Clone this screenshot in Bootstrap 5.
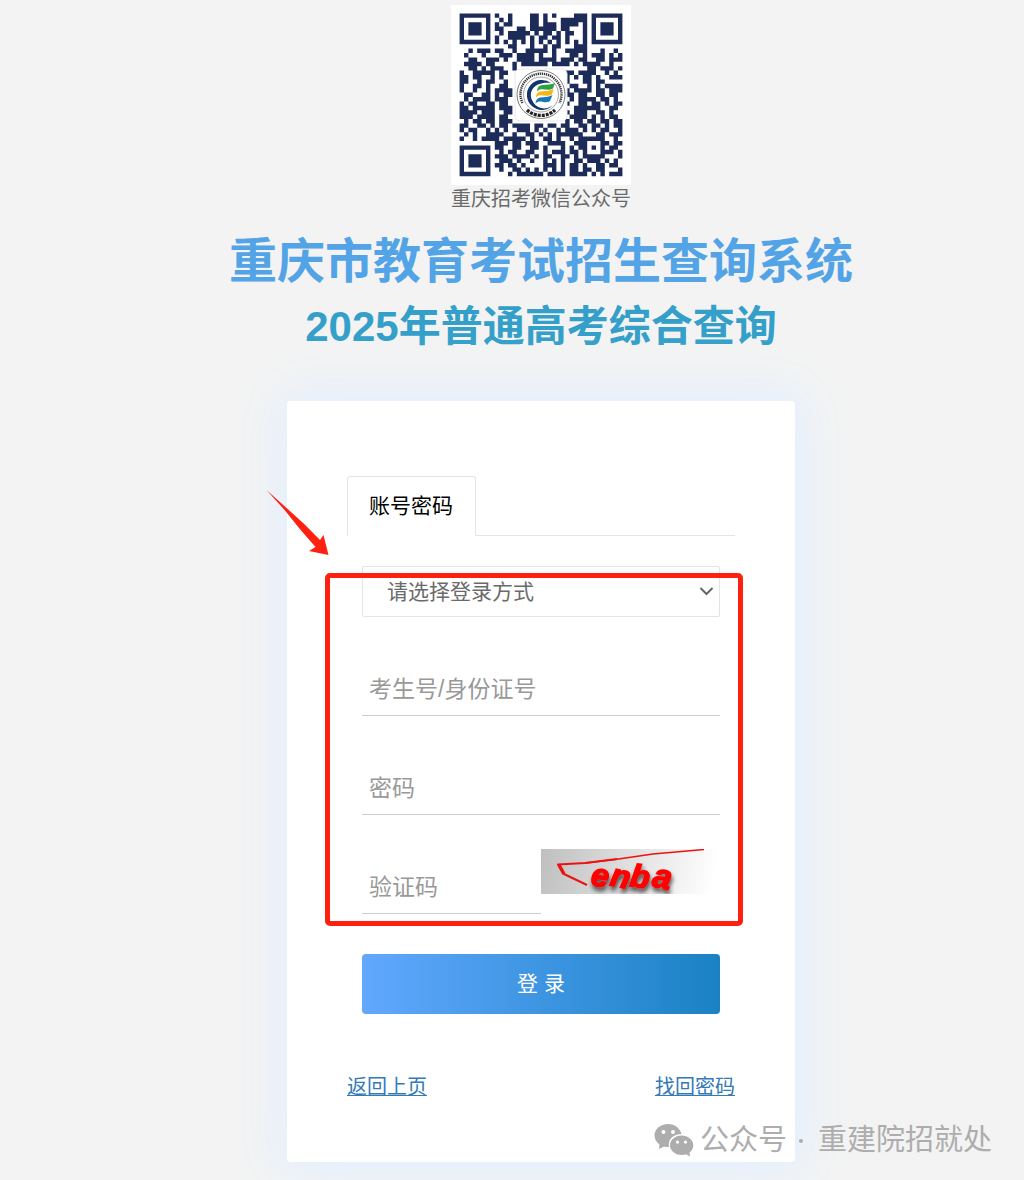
<!DOCTYPE html>
<html lang="zh-CN">
<head>
<meta charset="utf-8">
<meta name="viewport" content="width=device-width, initial-scale=1">
<title>重庆市教育考试招生查询系统</title>
<link href="https://cdn.jsdelivr.net/npm/bootstrap@5.3.0/dist/css/bootstrap.min.css" rel="stylesheet">
<style>
  body { background: #f3f3f3; font-family: "Liberation Sans", "Noto Sans CJK SC", sans-serif; color: #6a6a6a; }
  .page-wrap { padding: 5px 0 18px 58px; overflow: hidden; }
  .qr-code { width: 180px; height: 180px; }
  .qr-caption { font-size: 20px; line-height: 28px; }
  .site-title { font-size: 48px; line-height: 66px; font-weight: 700; color: #53a4e6; margin: 16px 0 2px; }
  .site-subtitle { font-size: 42px; line-height: 60px; font-weight: 700; color: #34a0ca; margin: 0 0 44px; }
  .login-card { width: 100%; max-width: 508px; padding: 75px 60px 60px; border: 0; border-radius: 4px; box-shadow: 0 0 50px 8px #e2efff; }
  .login-tabs { --bs-nav-tabs-border-color: #e4e4e4; --bs-nav-tabs-border-radius: 3px; }
  .login-tabs .nav-link.active { padding: 14px 22px 14px 21px; font-size: 21px; line-height: 30px; color: #000; font-weight: 400; border-color: #e4e4e4 #e4e4e4 #fff; }
  .login-form { padding: 30px 15px 0; }
  .login-form .form-select { height: 51px; padding: 0 24px; font-size: 21px; color: #6a6a6a; border-color: #e4e4e4; border-radius: 2px;
    background-image: none; }
  .select-arrow { position: absolute; right: 6px; top: 18px; width: 15px; height: 14px; pointer-events: none; }
  .line-input { height: 55px; padding: 2px 7px 0; border: 0; border-bottom: 1px solid #ccc; border-radius: 0; font-size: 23px; background: transparent; }
  .line-input::placeholder { color: #999; }
  .field-gap { margin-top: 44px; }
  .captcha-row { margin-top: 34px; }
  .captcha-img { height: 45px; margin-bottom: 20px; }
  .btn-login { height: 60px; margin-top: 40px; border: 0; border-radius: 4px; color: #fff; font-size: 21px; font-weight: 400; background: linear-gradient(90deg, #61a8ff, #1a82c4); }
  .btn-login:hover { color: #fff; }
  .foot-links { margin-top: 59px; font-size: 20px; line-height: 29px; }
  .foot-links a { color: #337ab7; text-decoration-thickness: 1px; }
  .mark-frame { position: absolute; left: 38px; right: 52px; top: 172px; height: 353px; border: 5px solid #ff2010; border-radius: 5px; pointer-events: none; }
  .mark-arrow { position: absolute; left: -21px; top: 88px; width: 64px; height: 68px; }
  .channel-tag { position: absolute; right: 32px; bottom: 18px; font-size: 29px; line-height: 44px; color: #adadad; white-space: nowrap; }
  .channel-tag svg { width: 40px; height: 34px; margin-right: 6px; }
  .tag-dot { width: 4px; height: 4px; border-radius: 50%; background: #adadad; margin: 2px 15px 0 12px; overflow: hidden; }
</style>
<script src="https://cdn.jsdelivr.net/npm/bootstrap@5.3.0/dist/js/bootstrap.bundle.min.js"></script>
</head>
<body>
<div class="page-wrap position-relative min-vh-100 d-flex flex-column align-items-center">
  <header class="text-center">
    <svg class="qr-code d-block mx-auto" viewBox="0 0 180 180" role="img" aria-label="重庆招考微信公众号二维码">
      <rect width="180" height="180" fill="#fff"/>
      <path id="qrModules" fill="#1c2b58" transform="translate(8.6 8.4) scale(4.4)"/>
      <rect x="64" y="64" width="52" height="52" rx="5" fill="#fff" stroke="#e8e8e8"/>
      <g fill="none">
        <circle cx="90" cy="89.500" r="24" stroke="#444" stroke-width=".7"/>
        <circle cx="90" cy="89.500" r="17.500" stroke="#666" stroke-width=".6"/>
        <path d="M71.500 98A20.500 20.500 0 1 1 108.500 98" stroke="#333" stroke-width="2.400" stroke-dasharray="1.300 .8"/>
        <path d="M76 105A20.800 20.800 0 0 0 104 105" stroke="#222" stroke-width="3.400" stroke-dasharray="3 1"/>
      </g>
      <path d="M100 78A15 15 0 1 0 102 100A13 13 0 0 1 81 95C77 86 84 76 100 78Z" fill="#12346f"/>
      <path d="M86 86.500C87 76.500 94 82 104 78L102 83.500C96 87 90 81.500 86 86.500Z" fill="#2da043"/>
      <path d="M85 92.500C86 83 93 88.500 102.500 84L101 89.500C94 93 89 87.500 85 92.500Z" fill="#f6b515"/>
      <path d="M84.500 98.500C86 89 93 94.500 101.500 90L99 96C94 99.500 89 93.500 84.500 98.500Z" fill="#1677b8"/>
    </svg>
    <div class="qr-caption">重庆招考微信公众号</div>
    <h1 class="site-title">重庆市教育考试招生查询系统</h1>
    <h2 class="site-subtitle">2025年普通高考综合查询</h2>
  </header>

  <main class="login-card card">
    <ul class="nav nav-tabs login-tabs">
      <li class="nav-item"><a class="nav-link active" href="#login" aria-current="page">账号密码</a></li>
    </ul>
    <form class="login-form" id="login">
      <div class="position-relative">
        <select class="form-select" aria-label="登录方式"><option>请选择登录方式</option></select>
        <svg class="select-arrow" viewBox="0 0 15 14" fill="none" stroke="#666" stroke-width="2"><path d="M1.500 4L7.500 10L13.500 4"/></svg>
      </div>
      <input class="form-control line-input field-gap" type="text" placeholder="考生号/身份证号" aria-label="考生号/身份证号">
      <input class="form-control line-input field-gap" type="password" placeholder="密码" aria-label="密码">
      <div class="row g-0 align-items-end captcha-row">
        <div class="col-6"><input class="form-control line-input" type="text" placeholder="验证码" aria-label="验证码"></div>
        <div class="col-6">
          <svg class="captcha-img d-block w-100" viewBox="0 0 179 45" preserveAspectRatio="none" role="img" aria-label="验证码图片">
            <defs>
              <linearGradient id="capBg" x1="0" y1="0" x2="1" y2=".05"><stop offset="0" stop-color="#bfbfbf"/><stop offset="1" stop-color="#fff"/></linearGradient>
              <filter id="capShade" x="-20%" y="-30%" width="150%" height="180%"><feDropShadow dx="1" dy="4" stdDeviation="2" flood-color="#222" flood-opacity=".75"/></filter>
            </defs>
            <rect width="179" height="45" fill="url(#capBg)"/>
            <g fill="none" stroke="#ee1111" stroke-linejoin="round">
              <path d="M163 0.500L112 5L74 10.500L45 14" stroke-width="1.500"/>
              <path d="M76 10L44 14L17 15.500L23 25L46 36" stroke-width="2"/>
              <path d="M18 16L23 25" stroke-width="3.500"/>
            </g>
            <g font-family="Liberation Sans, sans-serif" font-weight="700" font-style="italic" fill="#f00" stroke="#f00" stroke-width="1.500" filter="url(#capShade)">
              <text x="49" y="36" font-size="32" transform="rotate(8 49 36)">e</text>
              <text x="68" y="36" font-size="32" transform="rotate(12 68 36)">n</text>
              <text x="88" y="37" font-size="32" transform="rotate(8 88 37)">b</text>
              <text x="110" y="37" font-size="34" transform="rotate(12 110 37)">a</text>
            </g>
          </svg>
        </div>
      </div>
      <button class="btn btn-login w-100" type="submit">登 录</button>
    </form>
    <div class="foot-links d-flex justify-content-between">
      <a href="#back">返回上页</a>
      <a href="#recover">找回密码</a>
    </div>
    <div class="mark-frame"></div>
    <svg class="mark-arrow" viewBox="0 0 64 68" fill="#ff2010"><path d="M0.500 1L20 18.500Q38 34 54 51L57.500 46L62.500 66L43 62L49.500 58Q34 41 19 21.500Z"/></svg>
  </main>

  <div class="channel-tag d-flex align-items-center">
    <svg viewBox="0 0 40 34" fill="#adadad" aria-hidden="true">
      <path fill-rule="evenodd" d="M14 1C6.500 1 .5 6 .5 12.500C.5 16 2.500 19.500 5.500 21.500L5 26L10 23.500Q12 24 15 24C13.500 16 20 11 27.500 11C26 5 20.500 1 14 1ZM9.500 7a2 2 0 1 1 0 4a2 2 0 0 1 0-4ZM19 7a2 2 0 1 1 0 4a2 2 0 0 1 0-4Z"/>
      <path fill-rule="evenodd" d="M27.500 12.500C21 12.500 16 17 16 22.300S21 32 27.500 32Q30 32 32 31.300L36 33.500L35.500 29.500C38 27.700 39.300 25 39.300 22.300C39.300 17 34 12.500 27.500 12.500ZM23.500 17.500a1.600 1.600 0 1 1 0 3.200a1.600 1.600 0 0 1 0-3.200ZM31.500 17.500a1.600 1.600 0 1 1 0 3.200a1.600 1.600 0 0 1 0-3.200Z"/>
    </svg>
    <span>公众号</span><span class="tag-dot"></span><span>重建院招就处</span>
  </div>
</div>
<script>
  // One string per module row; '#' is a dark module.
  const rows = [
    "#######.#..#....##.#.#....###.#######",
    "#.....#..#.#....##.#...######.#.....#",
    "#.###.#.#.##....##.###.####.#.#.###.#",
    "#.###.#.##...##.######.##...#.#.###.#",
    "#.###.#..#.#####.#.##.#.##..#.#.###.#",
    "#.....#.#..####.#.##.##.#...#.#.....#",
    "#######.#.#.#.#.#.#.#.#.#.#.#.#######",
    "...........##...#..#.##...###........",
    "..#.###.##..#..#####.#..#####...#..#.",
    ".#...#...###.####.#..#...##.#.###.#.#",
    "..##..###.#..####.####.###.##..##.###",
    ".####.##....#.######.####.#.####..#..",
    "..##.#.###..#................##.###.#",
    "#..#####.##.............##.####..#.#.",
    "##.##..#.#..............#.#.##.#..###",
    "##..#.##..#.............#...##.##....",
    "#..##.#..##..............##..#.#.####",
    "#..#..#.####............#.####.##.###",
    ".##..##.#.##............##.##..##.##.",
    ".#.####.###..............#.####.##.#.",
    "#.##..##.##.............#..##.##.#.##",
    "##.#####.###..............######..##.",
    "####.###..##............#.###..##.#..",
    "###.####.##..............####.#.#.##.",
    ".#.##.##.###............#.##.##.##.##",
    "##..##.#.##.####.##.##.##..##.##.#.##",
    "#.##..#.#.#..###.#.#..#.###.#.#.##..#",
    ".#.#..####..#..##.#.#.######...##.###",
    "#..#.####.#####.#..##.#..#.######..#.",
    "........###.##.###..####..###...##.##",
    "#######.##..##..##.#...#.#.##.#.#.##.",
    "#.....#..#.##..##..#.###.##.#...###.#",
    "#.###.#.###.####.#.##..##.#.#####...#",
    "#.###.#..###.#..#..#.#.#..##.###.#.#.",
    "#.###.#.##.##.#....###.#.##.#..##.##.",
    "#.....#..#..##.#.#.#.#.#.##.##.##...#",
    "#######....#.######.####.####.#.#.###"
  ];
  document.getElementById("qrModules").setAttribute("d",
    rows.map((r, y) => [...r].map((c, x) => c === "#" ? `M${x} ${y}h1v1h-1z` : "").join("")).join(""));
</script>
</body>
</html>
